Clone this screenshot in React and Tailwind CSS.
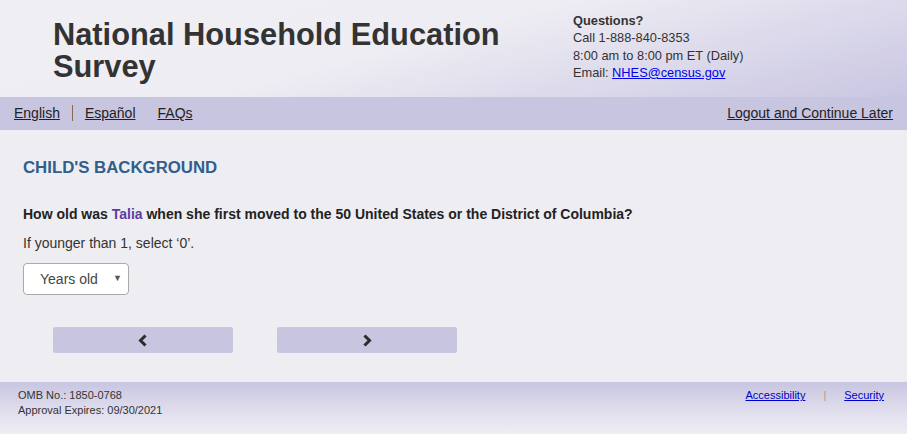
import React from 'react';

const Chevron = ({ dir }) => (
  <svg width="10" height="13" viewBox="0 0 10 13" className="text-[#2b2b2b]">
    {dir === 'left' ? (
      <path d="M7.5 1.5 L2.5 6.5 L7.5 11.5" fill="none" stroke="currentColor" strokeWidth="3" />
    ) : (
      <path d="M2.5 1.5 L7.5 6.5 L2.5 11.5" fill="none" stroke="currentColor" strokeWidth="3" />
    )}
  </svg>
);

export default function App() {
  return (
    <div className="w-[907px] h-[434px] overflow-hidden bg-[#eeedf2] font-['Liberation_Sans',Arial,sans-serif] flex flex-col">
      {/* Header */}
      <header className="h-[97px] shrink-0 flex bg-[linear-gradient(165deg,#f0eff4_0%,#eeedf3_45%,#c9c6e2_100%)]">
        <h1 className="ml-[53px] mt-[19px] w-[500px] text-[30.8px] leading-[32px] font-bold text-[#333]">
          National Household Education Survey
        </h1>
        <div className="ml-[20px] mt-[12px] text-[12.8px] leading-[17.3px] text-[#333]">
          <div className="font-bold">Questions?</div>
          <div>Call 1-888-840-8353</div>
          <div>8:00 am to 8:00 pm ET (Daily)</div>
          <div>
            Email: <a href="#" className="underline text-[#0000ee]">NHES@census.gov</a>
          </div>
        </div>
      </header>

      {/* Nav */}
      <nav className="h-[33px] shrink-0 bg-[#c8c5e1] flex items-center px-[14px] text-[14px] text-[#222]">
        <a href="#" className="underline">English</a>
        <span className="mx-[12px] w-px h-[16px] bg-[#8a6a4a] -mt-[2px]" />
        <a href="#" className="underline">Español</a>
        <a href="#" className="underline ml-[22px]">FAQs</a>
        <a href="#" className="underline ml-auto">Logout and Continue Later</a>
      </nav>

      {/* Main */}
      <main className="flex-1 px-[23px]">
        <h2 className="mt-[27px] text-[16.8px] leading-[21px] font-bold text-[#2f5f8d]">CHILD'S BACKGROUND</h2>
        <p className="mt-[27px] text-[14px] leading-[18px] font-bold text-[#222]">
          How old was <span className="text-[#5b3fa0]">Talia</span> when she first moved to the 50 United States or the District of Columbia?
        </p>
        <p className="mt-[11px] text-[14px] leading-[18px] text-[#333]">If younger than 1, select ‘0’.</p>
        <div className="mt-[11px] w-[106px] h-[32px] bg-white border border-[#aaa] rounded-[4px] flex items-center pl-[16px] pr-[6px] text-[14px] text-[#444]">
          <span>Years old</span>
          <span className="ml-auto text-[9px] text-[#555]">▼</span>
        </div>
        <div className="mt-[32px] ml-[30px] flex gap-[44px]">
          <button className="w-[180px] h-[26px] bg-[#c8c5e1] rounded-[2px] flex items-center justify-center">
            <Chevron dir="left" />
          </button>
          <button className="w-[180px] h-[26px] bg-[#c8c5e1] rounded-[2px] flex items-center justify-center">
            <Chevron dir="right" />
          </button>
        </div>
      </main>

      {/* Footer */}
      <footer className="h-[52px] shrink-0 bg-[linear-gradient(180deg,#c8c5e1_0%,#e2e0ee_60%,#eeedf3_100%)] flex px-[18px] pt-[6px] text-[11px] leading-[15px] text-[#333]">
        <div>
          <div>OMB No.: 1850-0768</div>
          <div>Approval Expires: 09/30/2021</div>
        </div>
        <div className="ml-auto mr-[5px] flex">
          <a href="#" className="underline text-[#0000cc]">Accessibility</a>
          <span className="mx-[18px] text-[#b89a70]">|</span>
          <a href="#" className="underline text-[#0000cc]">Security</a>
        </div>
      </footer>
    </div>
  );
}
